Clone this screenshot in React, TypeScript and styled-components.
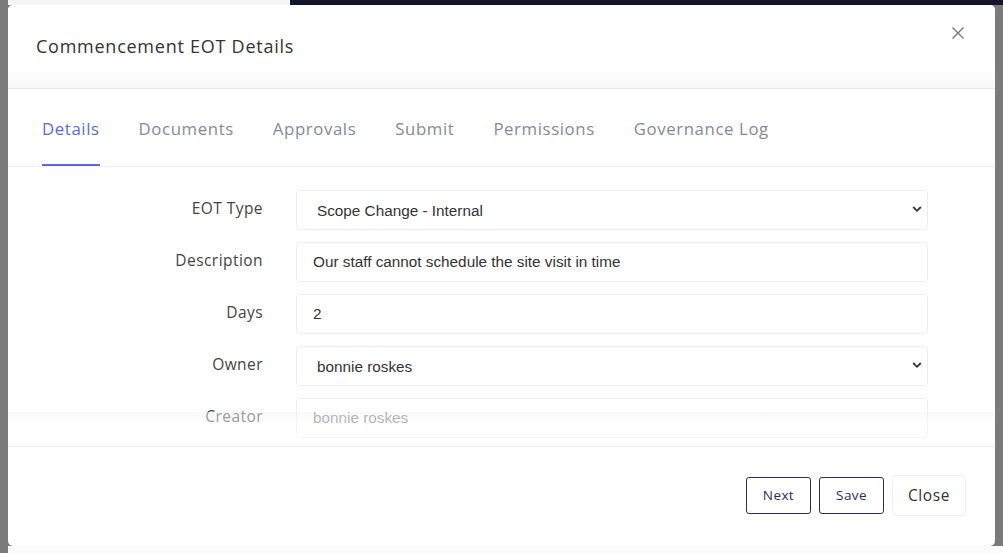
import React from "react";
import styled, { createGlobalStyle } from "styled-components";

const labelFont = `"Open Sans", "Noto Sans", sans-serif`;
const inputFont = `"Liberation Sans", Arial, sans-serif`;

const GlobalStyle = createGlobalStyle`
  html, body {
    margin: 0;
    padding: 0;
  }
  body {
    width: 1003px;
    height: 553px;
    overflow: hidden;
    background: #7b7b7b;
    font-family: ${labelFont};
  }
`;

const Page = styled.div`
  width: 1003px;
  height: 553px;
  display: flex;
  flex-direction: column;
  background: #7b7b7b;
`;

const TopStrip = styled.div`
  height: 5px;
  display: flex;
`;
const StripGray = styled.div`
  width: 8px;
  background: #7b7b7b;
`;
const StripLight = styled.div`
  width: 282px;
  background: #f6f6f6;
`;
const StripDark = styled.div`
  flex: 1;
  background: #14142b;
`;

const Stage = styled.div`
  flex: 1;
  display: flex;
  padding: 0 8px 0 8px;
`;

const BottomStrip = styled.div`
  height: 7px;
  display: flex;
`;
const BottomLight = styled.div`
  flex: 1;
  background: #fbfbfb;
`;

const Modal = styled.div`
  width: 987px;
  height: 541px;
  background: #fff;
  border-radius: 5px;
  display: flex;
  flex-direction: column;
  overflow: hidden;
`;

const Header = styled.div`
  height: 83px;
  flex: none;
  display: flex;
  align-items: flex-start;
  justify-content: space-between;
  padding: 0 30px 0 28px;
  border-bottom: 1px solid #e8e8ec;
  background: linear-gradient(to bottom, #fff 0%, #fff 72%, #f8f8f9 100%);
`;

const Title = styled.h2`
  margin: 29px 0 0 0;
  font-size: 18px;
  font-weight: 400;
  color: #333;
  letter-spacing: 0.75px;
`;

const CloseX = styled.button`
  margin-top: 21px;
  border: none;
  background: none;
  padding: 0;
  width: 14px;
  height: 14px;
  cursor: pointer;
  display: flex;
`;

const TabBar = styled.div`
  height: 77px;
  flex: none;
  display: flex;
  align-items: stretch;
  padding-left: 34px;
  gap: 39px;
  border-bottom: 1px solid #eceef2;
`;

const Tab = styled.div<{ $active?: boolean }>`
  display: flex;
  align-items: center;
  font-size: 16.8px;
  letter-spacing: 0.6px;
  color: ${(p) => (p.$active ? "#5b6bd4" : "#868999")};
  border-bottom: 2px solid ${(p) => (p.$active ? "#5b6bd4" : "transparent")};
  padding-top: 3px;
  box-sizing: border-box;
`;

const Body = styled.div`
  position: relative;
  flex: 1;
  overflow: hidden;
  padding-top: 23px;
  border-bottom: 1px solid #eceef2;
`;

const Form = styled.div`
  display: grid;
  grid-template-columns: 255px 632px;
  column-gap: 33px;
  row-gap: 12px;
  align-items: center;
`;

const Label = styled.label`
  text-align: right;
  font-size: 15.5px;
  letter-spacing: 0.45px;
  color: #444;
  padding-bottom: 4px;
`;

const fieldBase = `
  box-sizing: border-box;
  height: 40px;
  width: 100%;
  border: 1px solid #ecedf2;
  border-radius: 4px;
  font-family: ${inputFont};
  font-size: 15.3px;
  color: #333;
  background: #fff;
  outline: none;
`;

const Input = styled.input`
  ${fieldBase}
  padding: 0 16px;
  &:disabled {
    color: #777;
  }
`;

const SelectWrap = styled.div`
  position: relative;
`;

const Select = styled.select`
  ${fieldBase}
  appearance: none;
  padding: 0 20px;
`;

const Chevron = styled.svg`
  position: absolute;
  right: 6px;
  top: 15px;
  pointer-events: none;
`;

const Fade = styled.div`
  position: absolute;
  left: 0;
  right: 0;
  bottom: 0;
  height: 34px;
  background: linear-gradient(
    to bottom,
    rgba(242, 242, 244, 0.5) 0%,
    rgba(255, 255, 255, 0.45) 30%,
    rgba(255, 255, 255, 0.4) 100%
  );
  pointer-events: none;
`;

const Footer = styled.div`
  height: 99px;
  flex: none;
  display: flex;
  align-items: center;
  justify-content: flex-end;
  padding: 0 29px 3px 0;
  box-sizing: border-box;
  gap: 8px;
`;

const OutlineButton = styled.button`
  height: 37px;
  padding: 0 16px;
  border: 1px solid #2e2c5c;
  border-radius: 3px;
  background: #fff;
  color: #2e2c5c;
  font-family: ${labelFont};
  font-size: 13.5px;
  letter-spacing: 0.4px;
  cursor: pointer;
`;

const PlainButton = styled.button`
  height: 41px;
  padding: 0 15px;
  border: 1px solid #eeeef1;
  border-radius: 4px;
  background: #fff;
  color: #333;
  font-family: ${labelFont};
  font-size: 15.5px;
  letter-spacing: 0.6px;
  cursor: pointer;
`;

function Caret() {
  return (
    <Chevron width="10" height="8" viewBox="0 0 10 8">
      <path d="M1.2 2 L5 5.8 L8.8 2" fill="none" stroke="#333" strokeWidth="1.8" />
    </Chevron>
  );
}

const tabs = ["Details", "Documents", "Approvals", "Submit", "Permissions", "Governance Log"];

export default function App() {
  return (
    <Page>
      <GlobalStyle />
      <TopStrip>
        <StripGray />
        <StripLight />
        <StripDark />
      </TopStrip>
      <Stage>
        <Modal>
          <Header>
            <Title>Commencement EOT Details</Title>
            <CloseX aria-label="Close">
              <svg width="14" height="14" viewBox="0 0 14 14">
                <path d="M1.5 1.5 L12.5 12.5 M12.5 1.5 L1.5 12.5" stroke="#777" strokeWidth="1.4" />
              </svg>
            </CloseX>
          </Header>
          <TabBar>
            {tabs.map((t, i) => (
              <Tab key={t} $active={i === 0}>
                {t}
              </Tab>
            ))}
          </TabBar>
          <Body>
            <Form>
              <Label>EOT Type</Label>
              <SelectWrap>
                <Select defaultValue="scope-internal">
                  <option value="scope-internal">Scope Change - Internal</option>
                </Select>
                <Caret />
              </SelectWrap>
              <Label>Description</Label>
              <Input defaultValue="Our staff cannot schedule the site visit in time" />
              <Label>Days</Label>
              <Input defaultValue="2" />
              <Label>Owner</Label>
              <SelectWrap>
                <Select defaultValue="bonnie">
                  <option value="bonnie">bonnie roskes</option>
                </Select>
                <Caret />
              </SelectWrap>
              <Label>Creator</Label>
              <Input defaultValue="bonnie roskes" disabled />
            </Form>
            <Fade />
          </Body>
          <Footer>
            <OutlineButton>Next</OutlineButton>
            <OutlineButton>Save</OutlineButton>
            <PlainButton>Close</PlainButton>
          </Footer>
        </Modal>
      </Stage>
      <BottomStrip>
        <StripGray />
        <BottomLight />
      </BottomStrip>
    </Page>
  );
}
